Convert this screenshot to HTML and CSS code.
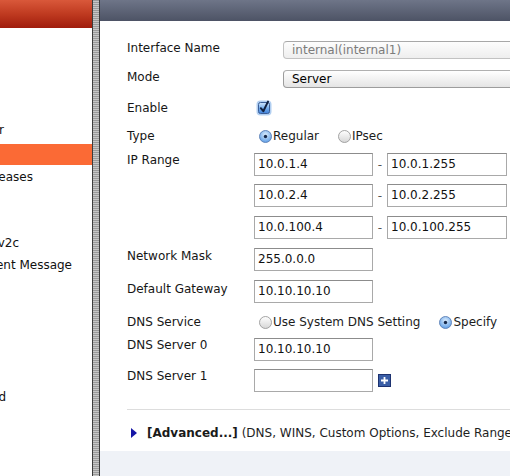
FILE: index.html
```html
<!DOCTYPE html>
<html>
<head>
<meta charset="utf-8">
<title>DHCP Server</title>
<link rel="stylesheet" href="styles.css">
</head>
<body>
<div class="page">
  <aside class="sidebar">
    <div class="side-head"></div>
    <ul class="nav">
      <li class="nav-item e4"><span>DHCP Server</span></li>
      <li class="nav-item active"><span></span></li>
      <li class="nav-item e32"><span>DHCP Leases</span></li>
      <li class="nav-item"><span></span></li>
      <li class="nav-item"><span></span></li>
      <li class="nav-item e19"><span>SNMP v1/v2c</span></li>
      <li class="nav-item e72"><span>Replacement Message</span></li>
      <li class="nav-item"><span></span></li>
      <li class="nav-item"><span></span></li>
      <li class="nav-item"><span></span></li>
      <li class="nav-item"><span></span></li>
      <li class="nav-item"><span></span></li>
      <li class="nav-item e6"><span>Advanced</span></li>
    </ul>
  </aside>
  <div class="sep"></div>
  <main class="main">
    <div class="main-head"></div>
    <div class="form">
      <div class="row r-name">
        <div class="label">Interface Name</div>
        <div class="field-ro">internal(internal1)</div>
      </div>
      <div class="row r-mode">
        <div class="label">Mode</div>
        <div class="select">Server</div>
      </div>
      <div class="row r-enable">
        <div class="label">Enable</div>
        <svg class="checkbox" width="17" height="17" viewBox="0 0 17 17">
          <defs>
            <linearGradient id="cbg" x1="0" y1="0" x2="0" y2="1">
              <stop offset="0" stop-color="#d2e7fc"/>
              <stop offset="0.5" stop-color="#78b0ee"/>
              <stop offset="1" stop-color="#3f80d8"/>
            </linearGradient>
          </defs>
          <rect x="0.5" y="1.5" width="15" height="15" rx="4" fill="#9fc3ee" opacity="0.8"/>
          <rect x="2.5" y="3.5" width="11" height="11" rx="2" fill="url(#cbg)" stroke="#3a5e98" stroke-width="1"/>
          <path d="M4.8 9.2 L7.3 12.2 L12 2.6" fill="none" stroke="#10203f" stroke-width="2" stroke-linecap="round" stroke-linejoin="round"/>
        </svg>
      </div>
      <div class="row r-type">
        <div class="label">Type</div>
        <div class="radios">
          <label class="radio">
            <svg width="13" height="13" viewBox="0 0 13 13">
              <defs>
                <radialGradient id="rs1" cx="50%" cy="35%" r="65%">
                  <stop offset="0" stop-color="#dcedfd"/>
                  <stop offset="1" stop-color="#5d9de6"/>
                </radialGradient>
              </defs>
              <circle cx="6.5" cy="6.5" r="6" fill="url(#rs1)" stroke="#5b7fb4" stroke-width="0.9"/>
              <circle cx="6.5" cy="6.5" r="1.7" fill="#16284a"/>
            </svg>
            <span>Regular</span>
          </label>
          <label class="radio">
            <svg width="13" height="13" viewBox="0 0 13 13">
              <defs>
                <linearGradient id="ru1" x1="0" y1="0" x2="0" y2="1">
                  <stop offset="0" stop-color="#ffffff"/>
                  <stop offset="1" stop-color="#d6d6d6"/>
                </linearGradient>
              </defs>
              <circle cx="6.5" cy="6.5" r="6" fill="url(#ru1)" stroke="#9a9a9a" stroke-width="0.9"/>
            </svg>
            <span>IPsec</span>
          </label>
        </div>
      </div>
      <div class="row r-range">
        <div class="label">IP Range</div>
        <div class="ranges">
          <div class="range"><div class="field">10.0.1.4</div><span class="dash">-</span><div class="field wide">10.0.1.255</div></div>
          <div class="range"><div class="field">10.0.2.4</div><span class="dash">-</span><div class="field wide">10.0.2.255</div></div>
          <div class="range"><div class="field">10.0.100.4</div><span class="dash">-</span><div class="field wide">10.0.100.255</div></div>
        </div>
      </div>
      <div class="row r-mask">
        <div class="label">Network Mask</div>
        <div class="field">255.0.0.0</div>
      </div>
      <div class="row r-gw">
        <div class="label">Default Gateway</div>
        <div class="field">10.10.10.10</div>
      </div>
      <div class="row r-dns">
        <div class="label">DNS Service</div>
        <div class="radios">
          <label class="radio">
            <svg width="13" height="13" viewBox="0 0 13 13">
              <defs>
                <linearGradient id="ru2" x1="0" y1="0" x2="0" y2="1">
                  <stop offset="0" stop-color="#ffffff"/>
                  <stop offset="1" stop-color="#d6d6d6"/>
                </linearGradient>
              </defs>
              <circle cx="6.5" cy="6.5" r="6" fill="url(#ru2)" stroke="#9a9a9a" stroke-width="0.9"/>
            </svg>
            <span>Use System DNS Setting</span>
          </label>
          <label class="radio">
            <svg width="13" height="13" viewBox="0 0 13 13">
              <defs>
                <radialGradient id="rs2" cx="50%" cy="35%" r="65%">
                  <stop offset="0" stop-color="#dcedfd"/>
                  <stop offset="1" stop-color="#5d9de6"/>
                </radialGradient>
              </defs>
              <circle cx="6.5" cy="6.5" r="6" fill="url(#rs2)" stroke="#5b7fb4" stroke-width="0.9"/>
              <circle cx="6.5" cy="6.5" r="1.7" fill="#16284a"/>
            </svg>
            <span>Specify</span>
          </label>
        </div>
      </div>
      <div class="row r-dns0">
        <div class="label">DNS Server 0</div>
        <div class="field">10.10.10.10</div>
      </div>
      <div class="row r-dns1">
        <div class="label">DNS Server 1</div>
        <div class="field"></div>
        <svg class="plus" width="13" height="13" viewBox="0 0 13 13">
          <rect x="0.5" y="0.5" width="12" height="12" fill="#3a5ea6" stroke="#1d3270"/>
          <path d="M6.5 3v7M3 6.5h7" stroke="#ffffff" stroke-width="1.8"/>
        </svg>
      </div>
      <div class="divider"></div>
      <div class="advanced">
        <span class="tri"></span>
        <span class="adv-text"><b>[Advanced...]</b> (DNS, WINS, Custom Options, Exclude Ranges)</span>
      </div>
    </div>
    <div class="band"></div>
  </main>
</div>
</body>
</html>
```
FILE: styles.css
```css
* { box-sizing: border-box; }
html, body { margin: 0; padding: 0; overflow: hidden; }
body {
  width: 510px;
  height: 476px;
  font-family: "DejaVu Sans", Verdana, sans-serif;
  font-size: 12px;
  color: #1c1c1c;
  background: #fff;
}
.page { display: flex; width: 510px; height: 476px; overflow: hidden; }

/* sidebar */
.sidebar { width: 92px; flex: none; background: #fff; overflow: hidden; }
.side-head {
  height: 28px;
  background: linear-gradient(#d9583a, #bf3a20 50%, #a01c0c);
}
.nav { list-style: none; margin: 91px 0 0; padding: 0; }
.nav-item { height: 22px; line-height: 22px; white-space: nowrap; overflow: hidden; color: #111; }
.nav-item span { display: block; width: 300px; text-align: right; margin-left: -300px; }
.nav-item.active { background: #fb6a35; height: 21px; margin: 3px 0 1px; }
.e4 span { margin-left: -296px; }
.e6 span { margin-left: -294px; }
.e19 span { margin-left: -281px; }
.e32 span { margin-left: -267px; }
.e72 span { margin-left: -228px; }

/* separator */
.sep {
  width: 8px;
  flex: none;
  border-left: 1px solid #3c3c3c;
  border-right: 1px solid #3c3c3c;
  background: repeating-linear-gradient(#9a9a9a 0 1px, #c6c6c6 1px 2px);
}

/* main */
.main { flex: 1; min-width: 0; overflow: hidden; display: flex; flex-direction: column; }
.main-head { height: 21px; flex: none; background: linear-gradient(#6e7588, #4d5365); }
.form { flex: 1; padding: 20px 0 0 27px; }
.row { display: flex; align-items: flex-start; }
.label { width: 127px; flex: none; line-height: 14px; color: #161616; }

.r-mode { margin-top: 11px; }
.r-enable { margin-top: 13px; height: 15px; }
.r-type { margin-top: 13px; height: 14px; }
.r-range { margin-top: 10px; }
.r-mask { margin-top: 9px; }
.r-mask .label { padding-top: 1px; }
.r-gw { margin-top: 9px; }
.r-gw .label { padding-top: 2px; }
.r-dns { margin-top: 12px; height: 14px; }
.r-dns0 { margin-top: 9px; }
.r-dns1 { margin-top: 8px; }

.field-ro, .select {
  margin-left: 29px;
  width: 320px;
  flex: none;
  height: 18px;
  border: 1px solid #c2c2c2;
  border-top-color: #a8a8a8;
  border-radius: 4px;
  padding-left: 8px;
  line-height: 16px;
  white-space: nowrap;
}
.field-ro { background: linear-gradient(#fdfdfd, #eeeeee); color: #7c7c7c; }
.select { background: linear-gradient(#ffffff, #e4e4e4); color: #000; border-color: #9c9c9c; border-top-color: #b0b0b0; }

.checkbox { margin-left: 2px; margin-top: -2px; display: block; flex: none; }

.radios { display: flex; align-items: center; margin-left: 5px; gap: 19px; white-space: nowrap; }
.radio { display: flex; align-items: center; gap: 1px; line-height: 14px; }
.radio svg { display: block; }

.ranges { display: flex; flex-direction: column; }
.range { display: flex; align-items: center; }
.range + .range { margin-top: 8px; }
.range:last-child { margin-top: 9px; }
.field {
  width: 119px;
  flex: none;
  height: 23px;
  border: 1px solid #a9a9a9;
  border-top-color: #8c8c8c;
  padding: 0 3px;
  line-height: 21px;
  color: #111;
  background: #fff;
  white-space: nowrap;
}
.field.wide { width: 120px; }
.dash { width: 14px; text-align: center; color: #555; }

.plus { display: block; margin: 5px 0 0 5px; flex: none; }

.divider { height: 1px; background: #dddddd; margin-top: 17px; }
.advanced { display: flex; align-items: center; padding-top: 16px; line-height: 14px; white-space: nowrap; }
.tri {
  width: 0; height: 0;
  flex: none;
  margin-left: 4px;
  border-left: 6px solid #1616a6;
  border-top: 5px solid transparent;
  border-bottom: 5px solid transparent;
}
.adv-text { margin-left: 10px; color: #1e1e1e; }
.adv-text b { color: #1a1a1a; }

.band { height: 25px; flex: none; background: #eff2f7; }
```
